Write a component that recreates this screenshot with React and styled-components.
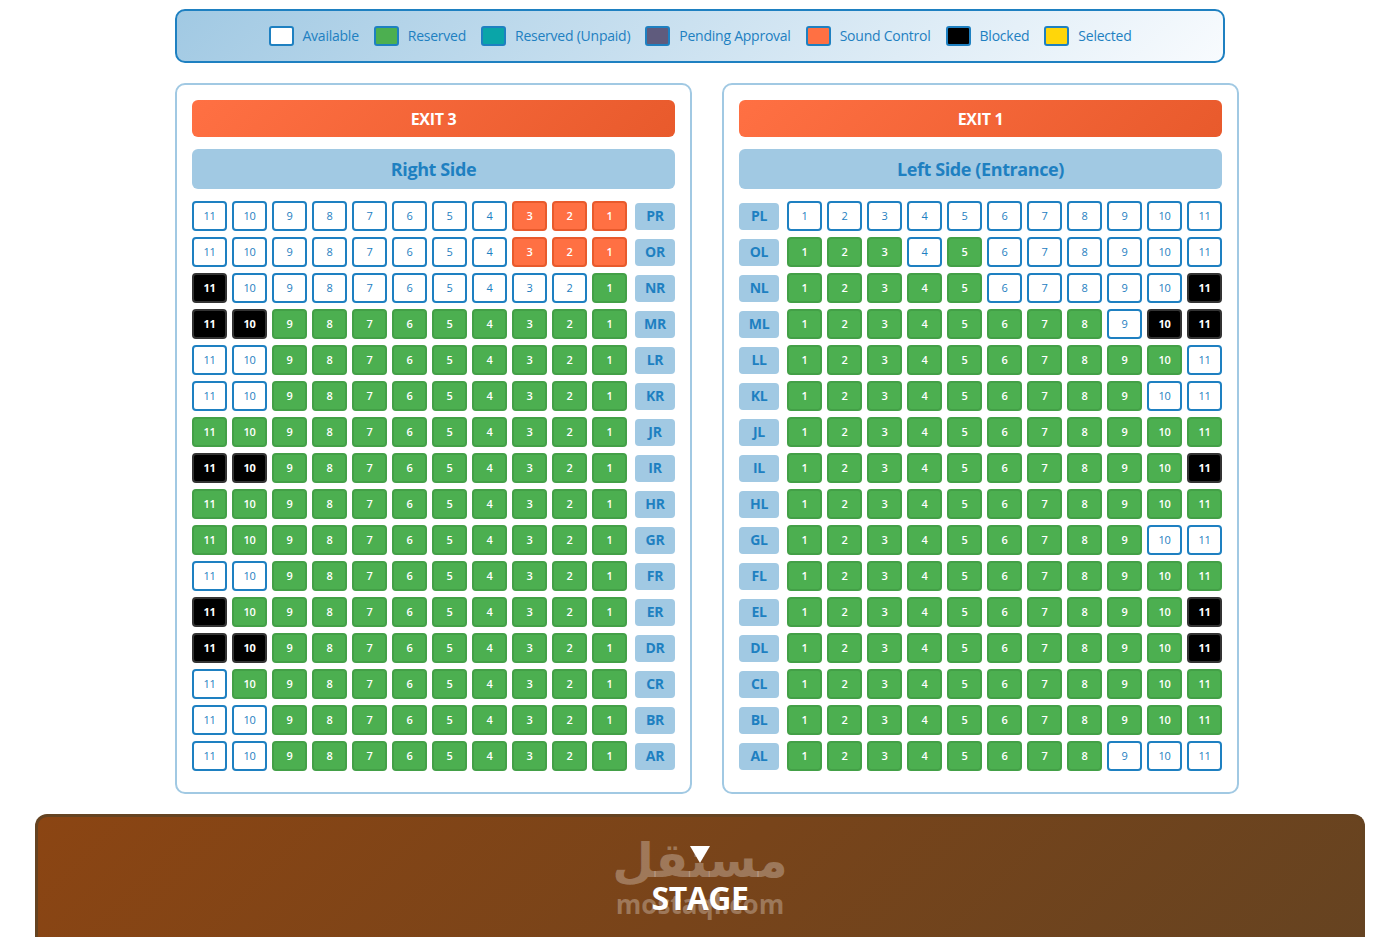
import React from 'react'
import styled, { createGlobalStyle } from "styled-components"

const legendItems = [
  { label: "Available", status: "a" },
  { label: "Reserved", status: "r" },
  { label: "Reserved (Unpaid)", status: "u" },
  { label: "Pending Approval", status: "p" },
  { label: "Sound Control", status: "s" },
  { label: "Blocked", status: "b" },
  { label: "Selected", status: "y" },
]

const swatches = {
  a: "#ffffff",
  r: "#4caf50",
  u: "#0aa5a8",
  p: "#5f5b7d",
  s: "#ff7043",
  b: "#000000",
  y: "#ffd60a",
}

// a available, r reserved, s sound control, b blocked
const rightRows = [
  ["PR", "aaaaaaaasss"],
  ["OR", "aaaaaaaasss"],
  ["NR", "baaaaaaaaar"],
  ["MR", "bbrrrrrrrrr"],
  ["LR", "aarrrrrrrrr"],
  ["KR", "aarrrrrrrrr"],
  ["JR", "rrrrrrrrrrr"],
  ["IR", "bbrrrrrrrrr"],
  ["HR", "rrrrrrrrrrr"],
  ["GR", "rrrrrrrrrrr"],
  ["FR", "aarrrrrrrrr"],
  ["ER", "brrrrrrrrrr"],
  ["DR", "bbrrrrrrrrr"],
  ["CR", "arrrrrrrrrr"],
  ["BR", "aarrrrrrrrr"],
  ["AR", "aarrrrrrrrr"],
]

const leftRows = [
  ["PL", "aaaaaaaaaaa"],
  ["OL", "rrraraaaaaa"],
  ["NL", "rrrrraaaaab"],
  ["ML", "rrrrrrrrabb"],
  ["LL", "rrrrrrrrrra"],
  ["KL", "rrrrrrrrraa"],
  ["JL", "rrrrrrrrrrr"],
  ["IL", "rrrrrrrrrrb"],
  ["HL", "rrrrrrrrrrr"],
  ["GL", "rrrrrrrrraa"],
  ["FL", "rrrrrrrrrrr"],
  ["EL", "rrrrrrrrrrb"],
  ["DL", "rrrrrrrrrrb"],
  ["CL", "rrrrrrrrrrr"],
  ["BL", "rrrrrrrrrrr"],
  ["AL", "rrrrrrrraaa"],
]

function Side({ exit, title, rows, labelFirst }) {
  return (
    <Panel>
      <Exit>{exit}</Exit>
      <SideTitle>{title}</SideTitle>
      {rows.map(([name, seats]) => (
        <Row key={name} $reverse={!labelFirst}>
          <RowLabel>{name}</RowLabel>
          <Seats>
            {seats.split("").map((status, i) => (
              <Seat key={i} $status={status}>
                {labelFirst ? i + 1 : 11 - i}
              </Seat>
            ))}
          </Seats>
        </Row>
      ))}
    </Panel>
  )
}

function App() {
  return (
    <>
      <GlobalStyle />
      <Page>
        <Legend>
          {legendItems.map(item => (
            <LegendItem key={item.label}>
              <Swatch $status={item.status} />
              <LegendText>{item.label}</LegendText>
            </LegendItem>
          ))}
        </Legend>

        <Hall>
          <Side exit="EXIT 3" title="Right Side" rows={rightRows} />
          <Side exit="EXIT 1" title="Left Side (Entrance)" rows={leftRows} labelFirst />
        </Hall>

        <Stage>
          <Watermark>
            <WatermarkArabic>مستقل</WatermarkArabic>
            <WatermarkLatin>mostaql.com</WatermarkLatin>
          </Watermark>
          <Triangle />
          <StageText>STAGE</StageText>
        </Stage>
      </Page>
    </>
  )
}

export default App

const GlobalStyle = createGlobalStyle`
  html, body {
    margin: 0;
    height: 937px;
    overflow: hidden;
    background: #ffffff;
    font-family: "Open Sans", "Noto Sans", sans-serif;
  }
`

const Page = styled.div`
  width: 1400px;
  display: flex;
  flex-direction: column;
  align-items: center;
  padding-top: 9px;
`

const Legend = styled.div`
  box-sizing: border-box;
  width: 1050px;
  height: 54px;
  display: flex;
  justify-content: center;
  align-items: center;
  gap: 15px;
  border: 2px solid #1e80c1;
  border-radius: 10px;
  background: linear-gradient(135deg, #a1c9e3, #f8fbfe);
`

const LegendItem = styled.div`
  display: flex;
  align-items: center;
  gap: 9px;
`

const LegendText = styled.span`
  margin-bottom: 2px;
  font-size: 14px;
  font-weight: 500;
  letter-spacing: -0.24px;
  color: #1e80c1;
`

const Swatch = styled.span`
  box-sizing: border-box;
  width: 25px;
  height: 20px;
  border: 2px solid #1e80c1;
  border-radius: 3px;
  background: ${props => swatches[props.$status]};
`

const Hall = styled.div`
  align-self: flex-start;
  display: flex;
  gap: 30px;
  margin: 20px 0 20px 175px;
`

const Panel = styled.section`
  box-sizing: border-box;
  width: 517px;
  padding: 15px;
  border: 2px solid #a1c9e3;
  border-radius: 10px;
  background: #ffffff;
`

const Exit = styled.div`
  height: 37px;
  margin-bottom: 12px;
  display: flex;
  justify-content: center;
  align-items: center;
  border-radius: 6px;
  background: linear-gradient(135deg, #ff7043, #e85a2c);
  color: #ffffff;
  font-size: 16px;
  font-weight: 700;
  letter-spacing: -0.3px;
`

const SideTitle = styled.div`
  height: 40px;
  margin-bottom: 12px;
  display: flex;
  justify-content: center;
  align-items: center;
  border-radius: 6px;
  background: #a1c9e3;
  color: #1e80c1;
  font-size: 18px;
  font-weight: 700;
  letter-spacing: -0.4px;
`

const Row = styled.div`
  display: flex;
  flex-direction: ${props => (props.$reverse ? "row-reverse" : "row")};
  justify-content: space-between;
  align-items: center;
  margin-bottom: 6px;
`

const RowLabel = styled.div`
  box-sizing: border-box;
  width: 40px;
  height: 27px;
  padding-bottom: 2px;
  display: flex;
  justify-content: center;
  align-items: center;
  border-radius: 4px;
  background: #a1c9e3;
  color: #1e80c1;
  font-size: 14px;
  font-weight: 700;
  letter-spacing: -0.3px;
`

const Seats = styled.div`
  display: flex;
  gap: 5px;
`

const seatText = { a: "#1e80c1", r: "#ffffff", s: "#ffffff", b: "#ffffff" }
const seatBorder = { a: "#1e80c1", r: "#43a047", s: "#e85a2c", b: "#333333" }

const Seat = styled.div`
  box-sizing: border-box;
  width: 35px;
  height: 30px;
  padding-bottom: 2px;
  display: flex;
  justify-content: center;
  align-items: center;
  border: 2px solid ${props => seatBorder[props.$status]};
  border-radius: 4px;
  background: ${props => swatches[props.$status]};
  color: ${props => seatText[props.$status]};
  font-size: 11px;
  letter-spacing: -0.3px;
  font-weight: ${props => (props.$status === "a" ? 400 : props.$status === "b" ? 700 : 600)};
`

const Stage = styled.div`
  box-sizing: border-box;
  position: relative;
  width: 1330px;
  height: 160px;
  display: flex;
  flex-direction: column;
  align-items: center;
  padding-top: 29px;
  border: 3px solid #654321;
  border-bottom: none;
  border-radius: 12px 12px 0 0;
  background: linear-gradient(135deg, #8b4513, #654321);
`

const Triangle = styled.div`
  position: relative;
  width: 0;
  height: 0;
  border-left: 10px solid transparent;
  border-right: 10px solid transparent;
  border-top: 17px solid #ffffff;
`

const StageText = styled.div`
  position: relative;
  margin-top: 15px;
  color: #ffffff;
  font-size: 32px;
  line-height: 40px;
  font-weight: 700;
  letter-spacing: -0.5px;
`

// site watermark lying over the stage
const Watermark = styled.div`
  position: absolute;
  top: 13px;
  left: 50%;
  transform: translateX(-50%);
  display: flex;
  flex-direction: column;
  align-items: center;
  color: rgba(255, 255, 255, 0.28);
  white-space: nowrap;
  pointer-events: none;
`

const WatermarkArabic = styled.div`
  font-family: "DejaVu Sans", sans-serif;
  font-size: 48px;
  line-height: 60px;
  font-weight: 700;
`

const WatermarkLatin = styled.div`
  font-family: "Open Sans", sans-serif;
  font-size: 26px;
  line-height: 28px;
  font-weight: 700;
`
